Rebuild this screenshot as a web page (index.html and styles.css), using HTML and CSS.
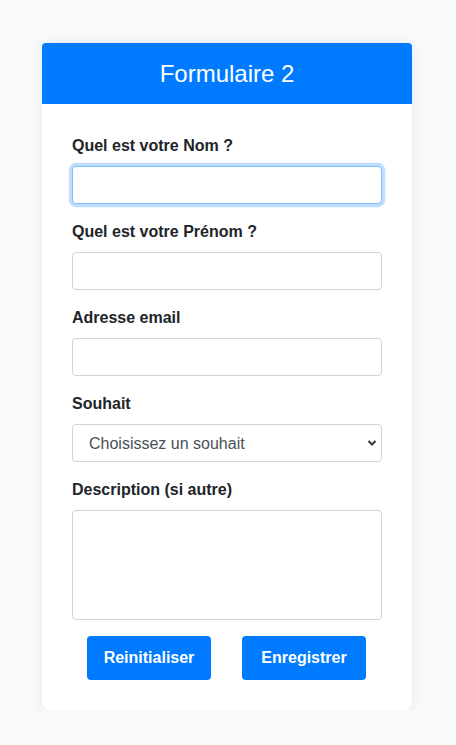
FILE: index.html
```html
<!DOCTYPE html>
<html lang="fr">
<head>
<meta charset="utf-8">
<title>Formulaire 2</title>
<link rel="stylesheet" href="styles.css">
</head>
<body>
<div class="card">
  <div class="card-header">Formulaire 2</div>
  <form class="card-body">
    <div class="group">
      <label class="label" for="nom">Quel est votre Nom ?</label>
      <input class="field focused" id="nom" type="text">
    </div>
    <div class="group">
      <label class="label" for="prenom">Quel est votre Prénom ?</label>
      <input class="field" id="prenom" type="text">
    </div>
    <div class="group">
      <label class="label" for="email">Adresse email</label>
      <input class="field" id="email" type="email">
    </div>
    <div class="group">
      <label class="label" for="souhait">Souhait</label>
      <div class="select-wrap">
        <select class="field select" id="souhait">
          <option>Choisissez un souhait</option>
        </select>
        <svg class="chevron" width="10" height="8" viewBox="0 0 10 8"><path d="M1.5 2 L5 5.5 L8.5 2" fill="none" stroke="#343a40" stroke-width="2"/></svg>
      </div>
    </div>
    <div class="group">
      <label class="label" for="desc">Description (si autre)</label>
      <textarea class="field area" id="desc"></textarea>
    </div>
    <div class="actions">
      <button class="btn" type="reset">Reinitialiser</button>
      <button class="btn" type="submit">Enregistrer</button>
    </div>
  </form>
</div>
</body>
</html>
```
FILE: styles.css
```css
* { box-sizing: border-box; }
html, body { margin: 0; }
body {
  background: #f8f9fa;
  font-family: "Liberation Sans", Arial, sans-serif;
  color: #212529;
  padding: 43px 2px 0 0;
}
.card {
  width: 370px;
  margin: 0 auto;
  background: #fff;
  border-radius: 8px;
  box-shadow: 0 0 12px rgba(0,0,0,0.08);
}
.card-header {
  background: #007bff;
  color: #fff;
  height: 61px;
  border-radius: 4px 4px 0 0;
  display: flex;
  align-items: center;
  justify-content: center;
  font-size: 24px;
}
.card-body {
  padding: 30px 30px 30px;
  margin: 0;
}
.group { margin-bottom: 16px; }
.label {
  display: block;
  font-weight: bold;
  font-size: 16px;
  line-height: 24px;
  margin-bottom: 8px;
}
.field {
  display: block;
  width: 100%;
  height: 38px;
  border: 1px solid #ced4da;
  border-radius: 4px;
  background: #fff;
  font-family: inherit;
  font-size: 16px;
  color: #495057;
  padding: 6px 12px;
  margin: 0;
  outline: none;
}
.focused {
  border-color: #80bdff;
  box-shadow: 0 0 0 3.2px rgba(0,123,255,0.25);
}
.select-wrap { position: relative; }
.select {
  -webkit-appearance: none;
  appearance: none;
  padding-left: 16px;
}
.chevron {
  position: absolute;
  right: 5px;
  top: 15px;
  pointer-events: none;
}
.area { height: 110px; resize: none; }
.actions {
  display: flex;
  gap: 31px;
  padding-left: 15px;
}
.btn {
  width: 124px;
  height: 44px;
  background: #007bff;
  color: #fff;
  border: none;
  border-radius: 4px;
  font-family: inherit;
  font-weight: bold;
  font-size: 16px;
  padding: 0;
}
```
